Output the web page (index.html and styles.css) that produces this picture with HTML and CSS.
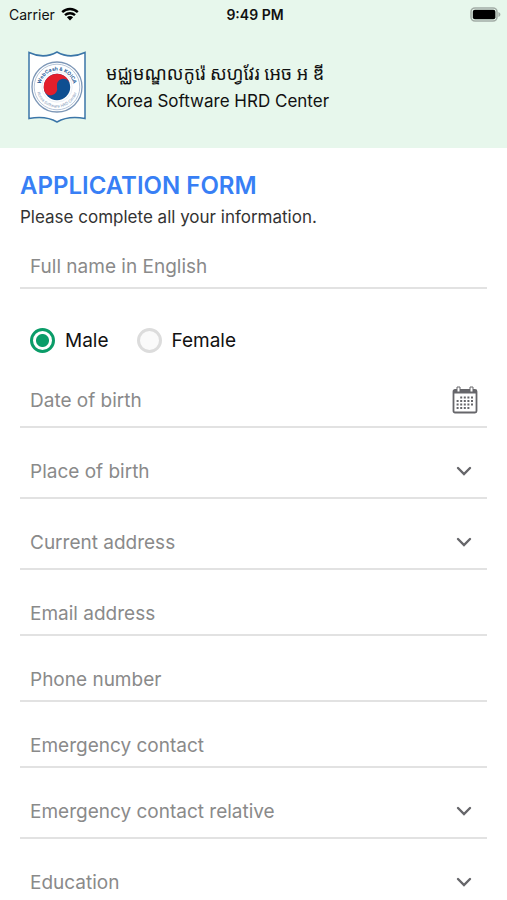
FILE: index.html
```html
<!DOCTYPE html>
<html lang="en">

<head>
    <meta charset="utf-8">
    <meta name="viewport" content="width=device-width, initial-scale=1">
    <title>Application Form</title>
    <link rel="stylesheet" href="styles.css">
</head>

<body>
    <div class="app">
        <header class="top">
            <div class="status">
                <div class="carrier">
                    <span>Carrier</span>
                    <svg class="wifi" viewBox="0 0 18 14" aria-hidden="true">
                        <path d="M1.2 5.2a11.2 11.2 0 0 1 15.6 0M4 8.2a7.2 7.2 0 0 1 10 0" fill="none" stroke="#000" stroke-width="2.4"/>
                        <path d="M5.9 10.3a4.4 4.4 0 0 1 6.2 0L9 13.6z"/>
                    </svg>
                </div>
                <b class="time">9:49 PM</b>
                <svg class="battery" viewBox="0 0 31 15" aria-hidden="true">
                    <rect x="1" y="1" width="26" height="13" rx="4" fill="#e7f7ec" stroke="#a3ada6" stroke-width="1.6"/>
                    <rect x="2.8" y="2.8" width="22.6" height="9.4" rx="2"/>
                    <path d="M28.4 5v5c1.2-.5 2-1.4 2-2.5s-.8-2-2-2.5z" fill="#a3ada6"/>
                </svg>
            </div>
            <div class="brand">
                <svg class="logo" viewBox="0 0 58 72" aria-hidden="true">
                    <defs>
                        <path id="arc-top" d="M12.500 36a16.500 16.500 0 0 1 33 0"/>
                        <path id="arc-bottom" d="M8.500 36a20.500 20.500 0 0 0 41 0"/>
                    </defs>
                    <path d="M1 1.500q15 7 28-.5 13 7.500 28 .5v66q-17-3-28 3.500-11-6.500-28-3.500z" fill="#fff" stroke="#3b76a8" stroke-width="1.500"/>
                    <circle cx="29" cy="36" r="25" fill="none" stroke="#7d97b7" stroke-width="1.300"/>
                    <circle cx="29" cy="36" r="22.800" fill="none" stroke="#a3b6ce" stroke-width=".8"/>
                    <circle cx="29" cy="36" r="15.200" fill="none" stroke="#dbe4ee" stroke-width=".6"/>
                    <circle cx="29" cy="36" r="13.200" fill="#0f4f91"/>
                    <path d="M16.200 39.400A13.200 13.200 0 0 1 41.800 32.600A6.600 6.600 0 0 0 29 36A6.600 6.600 0 0 1 16.200 39.400z" fill="#e31f2b"/>
                    <text class="ring-top"><textPath href="#arc-top" startOffset="50%">WebCash &amp; KOICA</textPath></text>
                    <text class="ring-bottom"><textPath href="#arc-bottom" startOffset="50%">Korea Software HRD Center</textPath></text>
                </svg>
                <div class="names">
                    <div class="khmer" lang="km">មជ្ឈមណ្ឌលកូរ៉េ សហ្វវែរ អេច អ ឌី</div>
                    <div>Korea Software HRD Center</div>
                </div>
            </div>
        </header>

        <form class="form">
            <h1>APPLICATION FORM</h1>
            <p>Please complete all your information.</p>

            <div class="field first">
                <input type="text" placeholder="Full name in English" aria-label="Full name in English">
            </div>

            <div class="gender">
                <label><input type="radio" name="gender" value="male" checked>Male</label>
                <label><input type="radio" name="gender" value="female">Female</label>
            </div>

            <div class="field tall">
                <input type="text" placeholder="Date of birth" aria-label="Date of birth">
                <svg class="calendar" viewBox="0 0 26 28" aria-hidden="true">
                    <rect x="1.500" y="4" width="23" height="22.500" rx="1.500" fill="#fff" stroke="#66666a" stroke-width="1.800"/>
                    <path d="M1.500 4h23v3.500h-23z" fill="#66666a"/>
                    <path d="M5 1h3v5H5zM18 1h3v5h-3z" fill="#fff" stroke="#66666a" stroke-width="1"/>
                    <path d="M8.200 11.500h13.600M4.600 15h17.200M4.600 18.500h17.200M4.600 22h13.600" fill="none" stroke="#66666a" stroke-width="2" stroke-dasharray="2 1.600"/>
                </svg>
            </div>

            <div class="field tall">
                <select aria-label="Place of birth"><option>Place of birth</option></select>
                <svg class="arrow" viewBox="0 0 16 10" aria-hidden="true"><path d="M2 2l6 6 6-6"/></svg>
            </div>

            <div class="field tall">
                <select aria-label="Current address"><option>Current address</option></select>
                <svg class="arrow" viewBox="0 0 16 10" aria-hidden="true"><path d="M2 2l6 6 6-6"/></svg>
            </div>

            <div class="field">
                <input type="email" placeholder="Email address" aria-label="Email address">
            </div>

            <div class="field">
                <input type="tel" placeholder="Phone number" aria-label="Phone number">
            </div>

            <div class="field">
                <input type="tel" placeholder="Emergency contact" aria-label="Emergency contact">
            </div>

            <div class="field tall">
                <select aria-label="Emergency contact relative"><option>Emergency contact relative</option></select>
                <svg class="arrow" viewBox="0 0 16 10" aria-hidden="true"><path d="M2 2l6 6 6-6"/></svg>
            </div>

            <div class="field tall">
                <select aria-label="Education"><option>Education</option></select>
                <svg class="arrow" viewBox="0 0 16 10" aria-hidden="true"><path d="M2 2l6 6 6-6"/></svg>
            </div>
        </form>
    </div>
</body>

</html>
```
FILE: styles.css
```css
* {
    box-sizing: border-box;
}

body {
    margin: 0;
    background-color: #fff;
    font-family: Inter, "Noto Sans", sans-serif;
    color: #111;
}

.app {
    height: 100vh;
    overflow-y: auto;
    scrollbar-width: none;
}

/* header */
.top {
    background-color: #e7f7ec;
    padding-bottom: 25px;
}

.status {
    display: grid;
    grid-template-columns: 1fr auto 1fr;
    align-items: center;
    height: 28px;
    padding: 0 6px 0 9px;
    font-size: 14px;
}

.carrier {
    display: flex;
    align-items: center;
    gap: 6px;
}

.time {
    font-size: 14px;
    font-weight: 600;
}

.wifi {
    width: 18px;
    height: 14px;
}

.battery {
    width: 31px;
    height: 15px;
    justify-self: end;
}

.brand {
    display: flex;
    align-items: center;
    gap: 20px;
    padding: 23px 28px 0;
}

.logo {
    width: 58px;
    height: 72px;
}

.ring-top,
.ring-bottom {
    fill: #2c5f9b;
    text-anchor: middle;
    font-size: 5px;
    font-weight: 700;
}

.ring-bottom {
    fill: #7d97b7;
    font-size: 4px;
    font-weight: 400;
}

.names {
    font-size: 17px;
    line-height: 28px;
}

.khmer {
    font-family: "Noto Sans Khmer", "Khmer OS", "Noto Sans", sans-serif;
    font-size: 18px;
}

/* form */
.form {
    padding: 24px 20px 0;
}

h1 {
    margin: 0;
    font-size: 24px;
    line-height: 28px;
    font-weight: 600;
    color: #387ff5;
}

p {
    margin: 4px 0 0;
    font-size: 17px;
    line-height: 26px;
    color: #333;
}

.field {
    display: grid;
    align-items: center;
    margin-top: 21px;
    border-bottom: 2px solid #e2e2e2;
}

.field.first {
    margin-top: 14px;
}

.field.tall {
    margin-top: 16px;
}

/* the icon shares one grid cell with its control */
.field > * {
    grid-area: 1 / 1;
}

.field input,
.field select {
    width: 100%;
    height: 43px;
    padding: 2px 10px 0;
    border: 0;
    outline: 0;
    appearance: none;
    background: transparent;
    font-family: inherit;
    font-size: 19px;
    color: #8a8a8a;
}

.field.tall input,
.field.tall select {
    height: 53px;
}

.field input::placeholder {
    color: #8a8a8a;
}

.arrow,
.calendar {
    justify-self: end;
    pointer-events: none;
}

.arrow {
    width: 16px;
    height: 10px;
    margin-right: 15px;
    fill: none;
    stroke: #66666a;
    stroke-width: 2.4;
    stroke-linecap: round;
}

.calendar {
    width: 26px;
    height: 28px;
    margin-right: 9px;
}

.gender {
    display: flex;
    align-items: center;
    gap: 28px;
    margin-top: 34px;
    padding-left: 10px;
    height: 34px;
}

.gender label {
    display: flex;
    align-items: center;
    gap: 10px;
    font-size: 19px;
}

.gender input {
    appearance: none;
    width: 25px;
    height: 25px;
    margin: 0;
    border: 3px solid #dcdcdc;
    border-radius: 50%;
    background-color: #fafafa;
}

.gender input:checked {
    border-color: #0a9c68;
    background: radial-gradient(circle, #0a9c68 6px, #fff 7px);
}
```
